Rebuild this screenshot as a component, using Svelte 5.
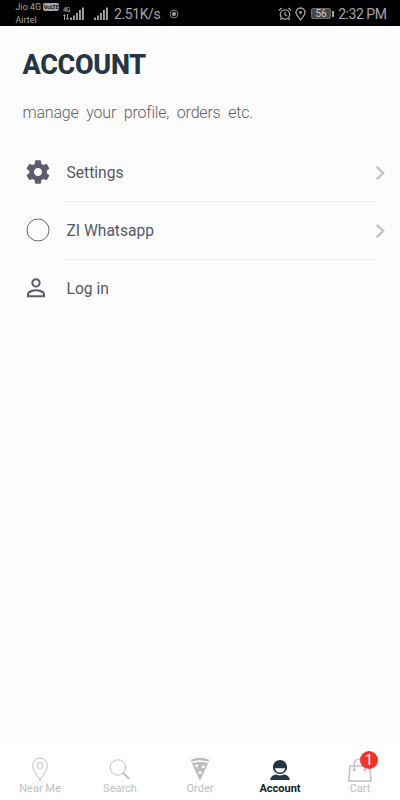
<script lang="ts">

    type MenuItem = {
        id: string;
        label: string;
        arrow: boolean;
    }

    type Tab = {
        id: string;
        label: string;
        badge?: number;
    }

    const menu: MenuItem[] = [
        { id: "settings", label: "Settings", arrow: true },
        { id: "whatsapp", label: "ZI Whatsapp", arrow: true },
        { id: "login", label: "Log in", arrow: false },
    ];

    const tabs: Tab[] = [
        { id: "near", label: "Near Me" },
        { id: "search", label: "Search" },
        { id: "order", label: "Order" },
        { id: "account", label: "Account" },
        { id: "cart", label: "Cart", badge: 1 },
    ];

    let active = $state("account");

</script>

{#snippet signal()}
    <svg class="signal" width="14" height="13" viewBox="0 0 14 13" fill="currentColor">
        <path d="M0 10.500h1.900V13H0zM3 8.500h1.900V13H3zM6 6h1.900v7H6zM9 3h1.900v10H9zM12 .5h1.900V13H12z" />
    </svg>
{/snippet}

<div class="screen">
    <div class="status">
        <div class="carrier">
            <div class="line">Jio 4G <span class="volte">VoLTE</span></div>
            <div class="line">Airtel</div>
        </div>
        <div class="network">
            <span>4G</span>
            <svg width="6" height="6" viewBox="0 0 6 6" fill="currentColor"><path d="M1.500 0L3 2H2v4H1V2H0zM4 0h1v4h1L4.500 6 3 4h1z" /></svg>
        </div>
        {@render signal()}
        <div class="second">{@render signal()}</div>
        <span class="speed">2.51K/s</span>
        <svg class="dot" width="10" height="10" viewBox="0 0 10 10">
            <circle cx="5" cy="5" r="3.900" fill="none" stroke="currentColor" stroke-width=".8" />
            <circle cx="5" cy="5" r="2" fill="currentColor" />
        </svg>
        <div class="right">
            <svg width="14" height="14" viewBox="0 0 14 14" fill="none" stroke="currentColor" stroke-width="1.300">
                <circle cx="7" cy="7.500" r="4.700" />
                <path d="M7 5v2.700l2 1.200M.8 3.500L3.700 1M13.200 3.500L10.300 1M3.700 11.200l-1.400 1.500M10.300 11.200l1.400 1.500" />
            </svg>
            <svg width="11" height="14" viewBox="0 0 11 14" fill="none" stroke="currentColor" stroke-width="1.300">
                <path d="M5.500 12.800C3.700 10.600 1 8 1 5.500a4.500 4.500 0 0 1 9 0c0 2.500-2.700 5.100-4.500 7.300z" />
                <circle cx="5.500" cy="5.500" r="1.400" fill="currentColor" stroke="none" />
            </svg>
            <div class="battery"><span>56</span></div>
            <span class="time">2:32 PM</span>
        </div>
    </div>

    <main>
        <h1>ACCOUNT</h1>
        <p>manage your profile, orders etc.</p>

        <div class="menu">
            {#each menu as item (item.id)}
                <div class="row">
                    <div class="row-icon">
                        {#if item.id == "settings"}
                            <svg width="28" height="28" viewBox="0 0 24 24" fill="#595d6c">
                                <path d="M19.430 12.980c.04-.32.07-.64.07-.98s-.03-.66-.07-.98l2.110-1.650c.19-.15.24-.42.12-.64l-2-3.460c-.12-.22-.39-.3-.61-.22l-2.490 1c-.52-.4-1.080-.73-1.690-.98l-.38-2.650C14.460 2.180 14.250 2 14 2h-4c-.25 0-.46.18-.49.42l-.38 2.650c-.61.25-1.170.59-1.690.98l-2.490-1c-.23-.09-.49 0-.61.22l-2 3.460c-.13.22-.07.49.12.64l2.110 1.650c-.04.32-.07.65-.07.98s.03.66.07.98l-2.110 1.650c-.19.15-.24.42-.12.64l2 3.460c.12.22.39.3.61.22l2.490-1c.52.4 1.080.73 1.690.98l.38 2.650c.03.24.24.42.49.42h4c.25 0 .46-.18.49-.42l.38-2.650c.61-.25 1.170-.59 1.690-.98l2.490 1c.23.09.49 0 .61-.22l2-3.460c.12-.22.07-.49-.12-.64l-2.110-1.650zM12 15.500c-1.930 0-3.500-1.570-3.500-3.500s1.570-3.500 3.500-3.500 3.500 1.570 3.500 3.500-1.570 3.500-3.500 3.500z" />
                            </svg>
                        {:else if item.id == "whatsapp"}
                            <svg width="28" height="28" viewBox="0 0 28 28" fill="none" stroke="#555766" stroke-width=".9">
                                <circle cx="14" cy="14" r="11" />
                            </svg>
                        {:else}
                            <svg width="28" height="28" viewBox="0 0 28 28" fill="none" stroke="#595d6c" stroke-width="2.100">
                                <circle cx="12" cy="8.900" r="3.600" />
                                <path d="M4 22.300v-1.800c0-3 5-4.200 8-4.200s8 1.200 8 4.200v1.800z" />
                            </svg>
                        {/if}
                    </div>
                    <div class="row-body">
                        <span>{item.label}</span>
                    </div>
                    {#if item.arrow}
                        <svg class="arrow" width="10" height="16" viewBox="0 0 10 16" fill="none" stroke="#c2c2c5" stroke-width="2.300">
                            <path d="M.8 1.800L7.200 8 .8 14.200" />
                        </svg>
                    {/if}
                </div>
            {/each}
        </div>
    </main>

    <nav>
        {#each tabs as tab (tab.id)}
            <button class="tab" class:active={active == tab.id} onclick={() => active = tab.id}>
                <span class="tab-icon">
                    {#if tab.id == "near"}
                        <svg width="28" height="26" viewBox="0 0 28 26" fill="none" stroke="currentColor">
                            <path d="M14 24.700C12.500 20.500 6.700 15 6.700 9.500a7.300 7.300 0 0 1 14.600 0c0 5.500-5.800 11-7.300 15.200z" />
                            <circle cx="14" cy="9.500" r="3" />
                        </svg>
                    {:else if tab.id == "search"}
                        <svg width="28" height="26" viewBox="0 0 28 26" fill="none" stroke="currentColor">
                            <circle cx="11.800" cy="11.500" r="7.700" />
                            <path d="M17.200 17l6 6" stroke-width="2" />
                        </svg>
                    {:else if tab.id == "order"}
                        <svg width="28" height="26" viewBox="0 0 28 26">
                            <path d="M5.100 4.900c5-2.400 12.800-2.400 17.800 0" fill="none" stroke="currentColor" stroke-width="2.500" />
                            <path d="M5.900 7.300c5-1.800 11.200-1.800 16.200 0L14 25z" fill="currentColor" />
                            <g fill="#fff">
                                <circle cx="10.700" cy="9.700" r="1.500" />
                                <circle cx="17.300" cy="10.800" r="1.500" />
                                <circle cx="14" cy="16.600" r="1.500" />
                            </g>
                        </svg>
                    {:else if tab.id == "account"}
                        <svg width="28" height="26" viewBox="0 0 28 26" fill="currentColor">
                            <circle cx="14" cy="11" r="7.100" />
                            <path d="M9 12.200h10a5 4.200 0 0 1-10 0z" fill="#fff" />
                            <path d="M4.200 24c.3-3.200 2.600-5 6.100-5.500 2.200 1.300 5.200 1.300 7.400 0 3.500.5 5.800 2.300 6.100 5.500z" />
                        </svg>
                    {:else}
                        <svg width="28" height="26" viewBox="0 0 28 26" fill="none" stroke="currentColor">
                            <path d="M4.200 10h19.600L25 25H2.600z" stroke-width="1.500" />
                            <path d="M8.300 14V8c0-6.500 10.500-6.500 10.500 0v6" stroke-width="1.300" />
                            <circle cx="8.300" cy="14" r="1.400" fill="currentColor" stroke="none" />
                            <circle cx="18.800" cy="14" r="1.400" fill="currentColor" stroke="none" />
                        </svg>
                    {/if}
                    {#if tab.badge}
                        <span class="badge">{tab.badge}</span>
                    {/if}
                </span>
                <span class="tab-label">{tab.label}</span>
            </button>
        {/each}
    </nav>
</div>

<style>
    :global(body) {
        background: #fcfcfc;
        overflow: hidden;
    }
    .screen {
        display: flex;
        flex-direction: column;
        height: 800px;
        width: 400px;
        background: #fcfcfc;
        font-family: Roboto, "Liberation Sans", sans-serif;
    }
    svg {
        display: block;
        flex: none;
    }
    .status {
        display: flex;
        align-items: center;
        box-sizing: border-box;
        height: 26px;
        padding: 1px 13.5px 0 15.5px;
        background: #000;
        color: #a5a5a5;
        white-space: nowrap;
    }
    .carrier {
        width: 47.5px;
        font-size: 9px;
        .line {
            display: flex;
            align-items: center;
            gap: 2px;
            height: 12.5px;
        }
    }
    .volte {
        width: 16px;
        height: 8px;
        border-radius: 2px;
        background: #a5a5a5;
        color: #000;
        font-size: 6px;
        line-height: 8px;
        font-weight: 500;
        text-align: center;
        letter-spacing: -0.3px;
    }
    .network {
        width: 7px;
        font-size: 6.5px;
        line-height: 7px;
        font-weight: 500;
        letter-spacing: -0.6px;
    }
    .second {
        margin-left: 10px;
    }
    .speed {
        margin-left: 6px;
        width: 48px;
        font-size: 14px;
        letter-spacing: -0.4px;
    }
    .dot {
        margin-left: 7px;
    }
    .right {
        display: flex;
        align-items: center;
        margin-left: auto;
        gap: 3px;
    }
    .battery {
        display: flex;
        align-items: center;
        margin: 0 1px 0 2px;
        span {
            box-sizing: border-box;
            width: 20px;
            height: 11px;
            border: 1px solid #6c6c6c;
            border-radius: 2px;
            background: #484848;
            color: #ccc;
            font-size: 10px;
            line-height: 9px;
            text-align: center;
        }
    }
    .battery::after {
        content: "";
        width: 2px;
        height: 6px;
        margin-left: 1px;
        background: #a5a5a5;
    }
    .time {
        font-size: 14px;
        letter-spacing: -0.45px;
    }
    main {
        flex: 1;
    }
    h1 {
        margin: 23px 0 0 22.5px;
        color: #263544;
        font-size: 27px;
        line-height: 32px;
        font-weight: 800;
        letter-spacing: -0.3px;
    }
    p {
        margin: 22px 0 0 22.5px;
        color: #606067;
        font-size: 16px;
        line-height: 20px;
        font-weight: 300;
        letter-spacing: -0.2px;
        word-spacing: 4px;
    }
    .menu {
        margin-top: 21px;
    }
    .row {
        display: flex;
        height: 58px;
        padding-left: 24px;
    }
    .row-icon {
        width: 40px;
        padding-top: 14.4px;
    }
    .row-body {
        box-sizing: border-box;
        width: 312px;
        padding: 19px 0 0 2.5px;
        border-bottom: 1px solid #f0f0f0;
        color: #55576a;
        font-size: 15.6px;
        line-height: 20px;
    }
    .row:last-child .row-body {
        border: none;
    }
    .arrow {
        margin-top: 21px;
    }
    nav {
        display: flex;
        height: 55px;
        background: #fff;
    }
    .tab {
        display: flex;
        flex-direction: column;
        align-items: center;
        width: 80px;
        padding: 11px 0 0;
        border: none;
        background: none;
        color: #bdbec3;
        font-family: inherit;
    }
    .tab-icon {
        position: relative;
    }
    .tab-label {
        font-size: 11px;
        line-height: 13px;
    }
    .tab.active {
        color: #263544;
        .tab-label {
            color: #101c2c;
            font-weight: 700;
        }
    }
    .badge {
        position: absolute;
        left: 14px;
        top: -5px;
        width: 18px;
        height: 18px;
        border-radius: 50%;
        background: #f0352b;
        color: #fff;
        font-size: 14px;
        line-height: 18px;
        text-align: center;
    }
</style>
